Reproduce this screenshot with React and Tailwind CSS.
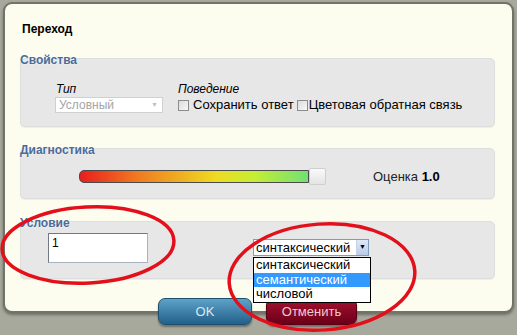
import React from "react";

const font = { fontFamily: '"Liberation Sans", Arial, sans-serif' };

// small grey checkbox as drawn by the old browser theme
const Box = () => (
  <span className="inline-block w-[11px] h-[11px] border border-[#8c8c8c] bg-gradient-to-br from-[#dcdcdc] to-[#f8f8f8] shrink-0" />
);

const Legend = ({ children }) => (
  <div className="relative z-10 h-4 leading-4 -mb-[10px] text-[12px] font-bold text-[#4b6b99] [text-shadow:0_0_2px_#fff]">
    {children}
  </div>
);

const Panel = ({ className, children }) => (
  <div
    className={
      "rounded-[5px] bg-[#e7e7e7] border border-[#dedede] shadow-[0_1px_1px_rgba(0,0,0,0.06)] " +
      className
    }
  >
    {children}
  </div>
);

const options = ["синтаксический", "семантический", "числовой"];

export default function App() {
  return (
    <div
      className="relative w-[517px] h-[335px] overflow-hidden bg-[#a8a99d] pt-[2px] pl-[3px] text-black"
      style={font}
    >
      <div className="w-[511px] h-[311px] border-2 border-[#727369] rounded-[9px] bg-[#fcfdee] pl-[15px] pr-[17px] pt-[17px] shadow-[0_2px_3px_rgba(0,0,0,0.35)]">
        {/* Title */}
        <div className="h-4 leading-4 text-[12px] font-bold pl-[2px]">Переход</div>

        {/* Свойства */}
        <div className="mt-[15px]">
          <Legend>Свойства</Legend>
          <Panel className="h-[69px] pl-[34px] pt-[23px] flex">
            <div className="w-[123px]">
              <div className="h-[14px] leading-[14px] text-[12px] italic pl-[1px]">Тип</div>
              <div className="mt-[1px] w-[108px] h-4 border border-[#d0d0d0] bg-white flex items-center justify-between pl-[3px] pr-[4px] text-[12px] text-[#a5a5a5]">
                <span>Условный</span>
                <span className="text-[7px] text-[#c0c0c0]">▼</span>
              </div>
            </div>
            <div>
              <div className="h-[14px] leading-[14px] text-[12px] italic">Поведение</div>
              <div className="mt-[1px] h-4 flex items-center text-[13px]">
                <Box />
                <span className="ml-[4px]">Сохранить ответ</span>
                <span className="ml-[3px]" />
                <Box />
                <span className="ml-[1px]">Цветовая обратная связь</span>
              </div>
            </div>
          </Panel>
        </div>

        {/* Диагностика */}
        <div className="mt-[15px]">
          <Legend>Диагностика</Legend>
          <Panel className="h-[51px] pl-[58px] pt-[6px] flex items-center">
            <div className="w-[230px] h-[13px] rounded-l-[5px] border border-[#4a4a4a] bg-[linear-gradient(to_right,#e81e1e_0%,#f07a20_25%,#eedc22_60%,#c6ee32_76%,#72e074_100%)]" />
            <div className="w-[17px] h-[17px] border border-[#cfcfcf] bg-gradient-to-b from-[#fafafa] to-[#e4e4e4] rounded-[2px]" />
            <div className="ml-[47px] text-[13px] text-[#222]">
              Оценка <b className="text-black">1.0</b>
            </div>
          </Panel>
        </div>

        {/* Условие */}
        <div className="mt-[16px]">
          <Legend>Условие</Legend>
          <Panel className="h-[58px] pl-[27px] pt-[11px] flex items-start">
            <div className="w-[100px] h-[30px] border border-[#6f7a86] border-b-[#a9b3bd] border-r-[#a9b3bd] bg-white text-[12px] leading-4 pl-[3px] pt-[1px]">
              1
            </div>
            <div className="relative ml-[105px] mt-[6px]">
              <div className="w-[116px] h-[17px] border border-[#7f9db9] bg-white flex items-center justify-between text-[13px] pl-[2px]">
                <span className="leading-4">синтаксический</span>
                <span className="w-[12px] h-[15px] bg-gradient-to-b from-[#dfe8f7] to-[#b9cbe8] border-l border-[#c4d2e8] flex items-center justify-center text-[7px]">
                  ▼
                </span>
              </div>
              <div className="absolute left-0 top-[18px] w-[118px] border border-black bg-white z-10 text-[13px]">
                {options.map((o, i) => (
                  <div
                    key={o}
                    className={
                      "h-[14.5px] leading-[14px] pl-[2px] " +
                      (i === 1 ? "bg-[#3399ff] text-white" : "")
                    }
                  >
                    {o}
                  </div>
                ))}
              </div>
            </div>
          </Panel>
        </div>

        {/* Buttons */}
        <div className="mt-[19px] flex justify-center gap-[14px]">
          <button className="w-[94px] h-[27px] rounded-[7px] border border-[#1d4f6e] bg-gradient-to-b from-[#5ea2c9] to-[#22618a] text-[13px] text-[#dbe9f3] shadow-[0_2px_2px_rgba(0,0,0,0.35)]">
            OK
          </button>
          <button className="w-[91px] h-[27px] rounded-[7px] border border-[#5a0016] bg-gradient-to-b from-[#a5132f] to-[#6c0019] text-[13px] text-[#f4c9d1] shadow-[0_2px_2px_rgba(0,0,0,0.35)]">
            Отменить
          </button>
        </div>
      </div>

      {/* red annotation marks */}
      <svg
        className="absolute inset-0 pointer-events-none z-20"
        width="517"
        height="335"
        viewBox="0 0 517 335"
      >
        <ellipse cx="88" cy="245" rx="86" ry="38" fill="none" stroke="#e3101c" strokeWidth="3.5" transform="rotate(-3 88 245)" />
        <ellipse cx="322" cy="277" rx="93" ry="53" fill="none" stroke="#e3101c" strokeWidth="3.5" transform="rotate(-4 322 277)" />
      </svg>
    </div>
  );
}
